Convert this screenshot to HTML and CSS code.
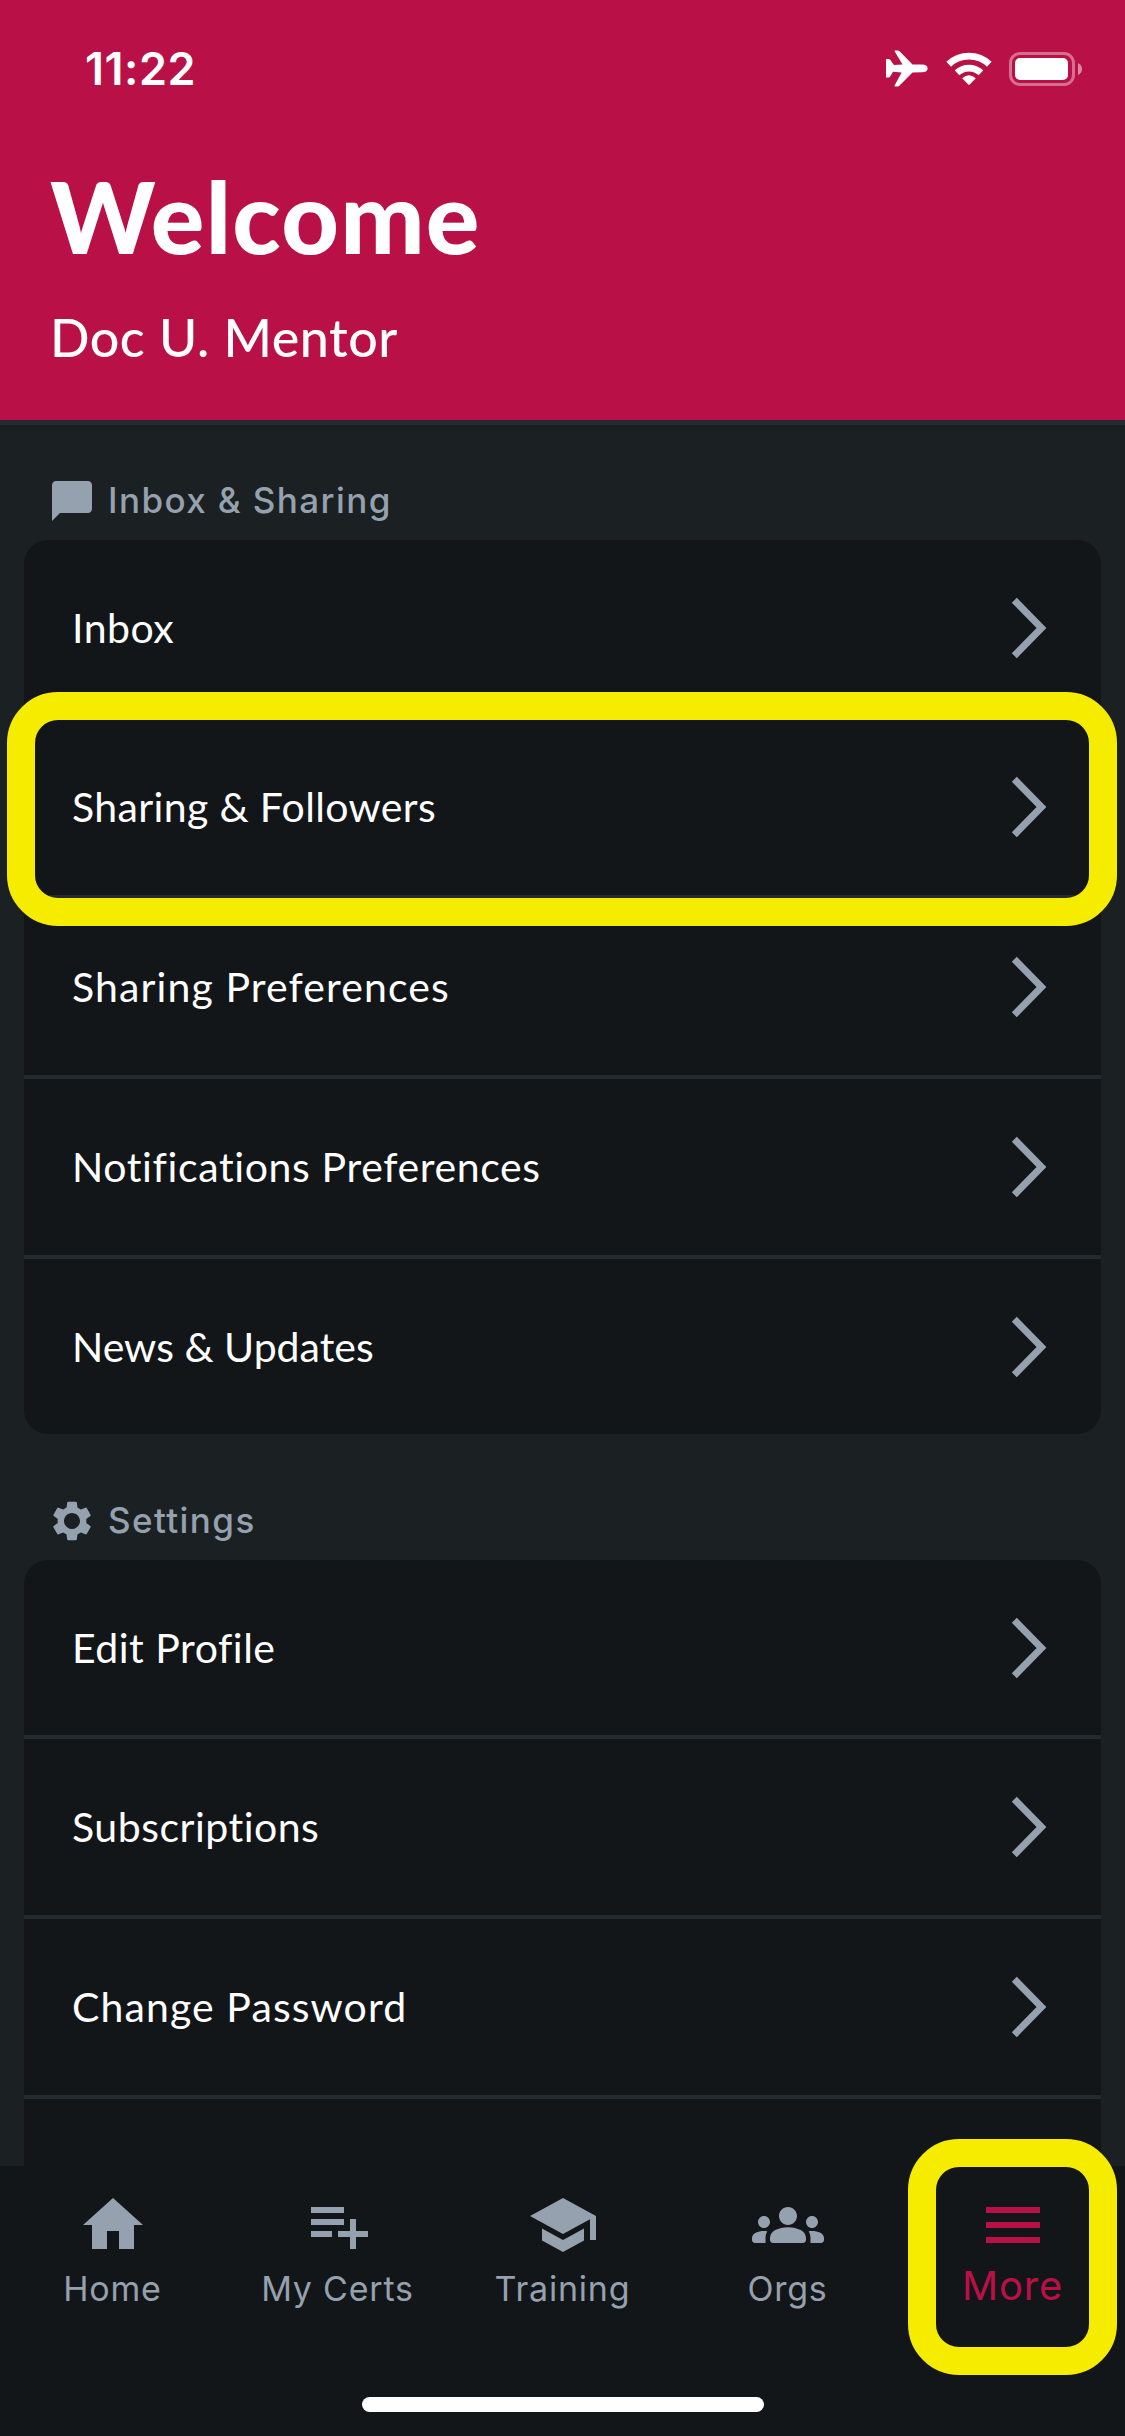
FILE: index.html
```
<!DOCTYPE html>
<html lang="en">
<head>
<meta charset="utf-8">
<title>More</title>
<link rel="stylesheet" href="styles.css">
</head>
<body>
<svg class="defs" aria-hidden="true">
  <symbol id="chevron" viewBox="0 0 40 64"><path d="M5.3 4.3L32.5 32L5.3 59.7" fill="none" stroke="currentColor" stroke-width="7"/></symbol>
</svg>
<div class="screen">
  <header class="header">
    <div class="status">
      <span class="time">11:22</span>
      <div class="status-icons">
        <svg width="42" height="38" viewBox="0 0 42 38" fill="currentColor"><path d="M0 9.6Q0 9 1 9h1.6Q3.6 9 4.2 9.8L8 15l8.5-.4L8.600 1.300Q8.100 .4 9.200 .4h2.300Q12.700 .4 13.600 1.300L26.500 14.500H36Q41.600 14.700 41.600 18.400T36 22.200L26.500 22.600L13.600 35.600Q12.700 36.500 11.500 36.500H9.200Q8.100 36.500 8.600 35.500L15.600 22.400L7 21.800L4.200 26.600Q3.600 27.500 2.600 27.500H1Q0 27.500 0 26.900Z"/></svg>
        <svg width="46" height="34" viewBox="0 0 46 34"><g fill="none" stroke="currentColor" stroke-width="6.800"><path d="M2.700 12.200A29.500 29.500 0 0 1 43.300 12.200"/><path d="M11 20.800A17.500 17.500 0 0 1 35 20.800"/></g><path fill="currentColor" d="M16.200 26.300Q23 20.300 29.800 26.300L24 32.300Q23 33.400 22 32.300Z"/></svg>
        <svg width="74" height="34" viewBox="0 0 74 34"><rect x="1.500" y="1.500" width="63" height="31" rx="9.500" fill="none" stroke="currentColor" stroke-width="3" opacity=".4"/><rect x="6" y="6" width="53" height="22" rx="5" fill="currentColor"/><path d="M69 11Q73 13 73 17T69 23Z" fill="currentColor" opacity=".5"/></svg>
      </div>
    </div>
    <h1>Welcome</h1>
    <p class="user">Doc U. Mentor</p>
  </header>

  <main class="content">
    <h2 class="label"><svg viewBox="0 0 24 24" fill="currentColor"><path d="M20 2H4c-1.100 0-2 .9-2 2v18l4-4h14c1.100 0 2-.9 2-2V4c0-1.100-.9-2-2-2z"/></svg><span>Inbox &amp; Sharing</span></h2>
    <ul class="card">
      <li class="row"><span>Inbox</span><svg class="chev"><use href="#chevron"/></svg></li>
      <li class="row"><span class="snug">Sharing &amp; Followers</span><svg class="chev"><use href="#chevron"/></svg><i class="ring ring-row"></i></li>
      <li class="row"><span class="wide">Sharing Preferences</span><svg class="chev"><use href="#chevron"/></svg></li>
      <li class="row"><span class="loose">Notifications Preferences</span><svg class="chev"><use href="#chevron"/></svg></li>
      <li class="row last"><span class="tight">News &amp; Updates</span><svg class="chev"><use href="#chevron"/></svg></li>
    </ul>
    <h2 class="label"><svg viewBox="0 0 24 24" fill="currentColor"><path d="M19.140 12.940c.04-.3.060-.61.060-.94 0-.32-.02-.64-.07-.94l2.030-1.580c.18-.14.230-.41.120-.61l-1.920-3.320c-.12-.22-.37-.29-.59-.22l-2.390.96c-.5-.38-1.030-.7-1.620-.94l-.36-2.540c-.04-.24-.24-.41-.48-.41h-3.840c-.24 0-.43.170-.47.410l-.36 2.540c-.59.240-1.130.570-1.620.940l-2.390-.96c-.22-.08-.47 0-.59.220L2.740 8.870c-.12.210-.08.470.120.610l2.030 1.580c-.05.300-.09.630-.09.940s.02.640.070.940l-2.030 1.580c-.18.140-.23.410-.12.610l1.920 3.320c.12.220.370.290.590.220l2.390-.96c.5.380 1.030.700 1.620.940l.36 2.540c.05.240.240.410.480.410h3.840c.24 0 .44-.17.470-.41l.36-2.540c.59-.24 1.130-.56 1.620-.94l2.390.960c.22.080.470 0 .59-.22l1.920-3.320c.12-.22.070-.47-.12-.61l-2.010-1.580zM12 16c-2.200 0-4-1.800-4-4s1.800-4 4-4 4 1.800 4 4-1.800 4-4 4z"/></svg><span>Settings</span></h2>
    <ul class="card">
      <li class="row"><span>Edit Profile</span><svg class="chev"><use href="#chevron"/></svg></li>
      <li class="row"><span>Subscriptions</span><svg class="chev"><use href="#chevron"/></svg></li>
      <li class="row"><span class="wide">Change Password</span><svg class="chev"><use href="#chevron"/></svg></li>
      <li class="row"></li>
    </ul>
  </main>

  <nav class="tabs">
    <a class="tab"><svg viewBox="0 0 24 24" fill="currentColor"><path d="M10 20v-6h4v6h5v-8h3L12 3 2 12h3v8z"/></svg><span>Home</span></a>
    <a class="tab"><svg viewBox="0 0 24 24" fill="currentColor"><path d="M14 10H3v2h11v-2zm0-4H3v2h11V6zm4 8v-4h-2v4h-4v2h4v4h2v-4h4v-2h-4zM3 16h7v-2H3v2z"/></svg><span>My Certs</span></a>
    <a class="tab"><svg viewBox="0 0 24 24" fill="currentColor"><path d="M5 13.180v4L12 21l7-3.820v-4L12 17l-7-3.820zM12 3L1 9l11 6 9-4.910V17h2V9L12 3z"/></svg><span>Training</span></a>
    <a class="tab"><svg viewBox="0 0 24 24" fill="currentColor"><path d="M12 12.750c1.630 0 3.070.390 4.240.900 1.080.480 1.760 1.560 1.760 2.730V17c0 .55-.45 1-1 1H7c-.55 0-1-.45-1-1v-.61c0-1.180.68-2.260 1.760-2.730 1.170-.52 2.610-.91 4.240-.91zM4 13c1.100 0 2-.9 2-2s-.9-2-2-2-2 .9-2 2 .9 2 2 2zM5.130 14.100C4.760 14.040 4.390 14 4 14c-.99 0-1.930.210-2.780.580C.480 14.900 0 15.620 0 16.430V17c0 .55.450 1 1 1h3.500v-1.610c0-.83.230-1.610.630-2.290zM20 13c1.100 0 2-.9 2-2s-.9-2-2-2-2 .9-2 2 .9 2 2 2zM24 16.430c0-.81-.48-1.530-1.220-1.850-.85-.37-1.790-.58-2.780-.58-.39 0-.76.040-1.130.1.400.680.630 1.460.630 2.290V18H23c.55 0 1-.45 1-1v-.57zM12 6c1.660 0 3 1.340 3 3s-1.340 3-3 3-3-1.340-3-3 1.340-3 3-3z"/></svg><span>Orgs</span></a>
    <a class="tab active"><svg viewBox="0 0 24 24" fill="currentColor"><path d="M3 18h18v-2H3v2zm0-5h18v-2H3v2zm0-7v2h18V6H3z"/></svg><span>More</span><i class="ring ring-tab"></i></a>
    <div class="home-bar"></div>
  </nav>
</div>
</body>
</html>
```
FILE: styles.css
```
* { box-sizing: border-box; }

body {
  margin: 0;
  background: #1b2023;
  font-family: Lato, "Liberation Sans", sans-serif;
  color: #fff;
}

h1, h2, p, ul { margin: 0; padding: 0; }

.defs { display: none; }

.screen {
  display: flex;
  flex-direction: column;
  width: 1125px;
  height: 2436px;
  overflow: hidden;
}

.header {
  flex: none;
  height: 425px;
  padding: 42px 42px 0 50px;
  background: #b91047;
  border-bottom: 5px solid #252b34;
}

.status {
  display: flex;
  justify-content: space-between;
  height: 113px;
  padding-left: 35px;
}

.time {
  font: 600 45px/54px Inter, sans-serif;
  letter-spacing: 0.5px;
}

.status-icons {
  display: flex;
  align-items: center;
  gap: 17px;
  height: 54px;
}

.status-icons svg:first-child { margin-right: 1px; }

h1 {
  font-weight: 900;
  font-size: 100px;
  line-height: 120px;
  letter-spacing: 1.3px;
}

.user {
  margin-top: 30px;
  font-weight: 500;
  font-size: 52px;
  line-height: 64px;
  letter-spacing: 0.55px;
}

.content {
  flex: 1;
  min-height: 0;
  padding: 0 24px;
}

.label {
  display: flex;
  align-items: center;
  gap: 12px;
  height: 126px;
  padding: 48px 0 0 24px;
  font: 500 35px/48px Inter, sans-serif;
  letter-spacing: 1.4px;
  color: #95a1ae;
}

.label:first-child {
  height: 115px;
  padding-top: 37px;
}

.label svg {
  width: 48px;
  height: 48px;
}

.label span { margin-bottom: 2px; }

.card {
  list-style: none;
  background: #131619;
  border-radius: 24px;
}

.row {
  position: relative;
  display: flex;
  align-items: center;
  justify-content: space-between;
  height: 180px;
  padding: 0 52px 0 48px;
  border-bottom: 4px solid #232a30;
  font-size: 41px;
  line-height: 50px;
  letter-spacing: 0.5px;
}

.row:first-child { height: 179px; }

.row.last {
  height: 175px;
  border-bottom: 0;
}

.row .snug { letter-spacing: 0.35px; }
.row .tight { letter-spacing: 0; }
.row .loose { letter-spacing: 0.62px; }
.row .wide { letter-spacing: 1.1px; }

.chev {
  width: 40px;
  height: 64px;
  color: #95a1ae;
}

.ring {
  position: absolute;
  z-index: 2;
  border: 28px solid #f6ec00;
  border-radius: 51px;
  pointer-events: none;
}

.ring-row {
  top: -27px;
  left: -17px;
  width: 1110px;
  height: 234px;
}

.tabs {
  position: relative;
  flex: none;
  display: grid;
  grid-template-columns: repeat(5, 225px);
  height: 270px;
  background: #131619;
}

.tab {
  position: relative;
  display: flex;
  flex-direction: column;
  align-items: center;
  gap: 7px;
  padding-top: 23px;
  font: 400 34px/42px Inter, sans-serif;
  letter-spacing: 0.8px;
  color: #95a1ae;
}

.tab svg {
  width: 72px;
  height: 72px;
}

.active {
  gap: 4px;
  font-size: 40px;
  color: #b91047;
}

.ring-tab {
  top: -27px;
  left: 8px;
  width: 209px;
  height: 236px;
}

.home-bar {
  position: absolute;
  left: 362px;
  bottom: 24px;
  width: 402px;
  height: 15px;
  border-radius: 8px;
  background: #fff;
}
```
